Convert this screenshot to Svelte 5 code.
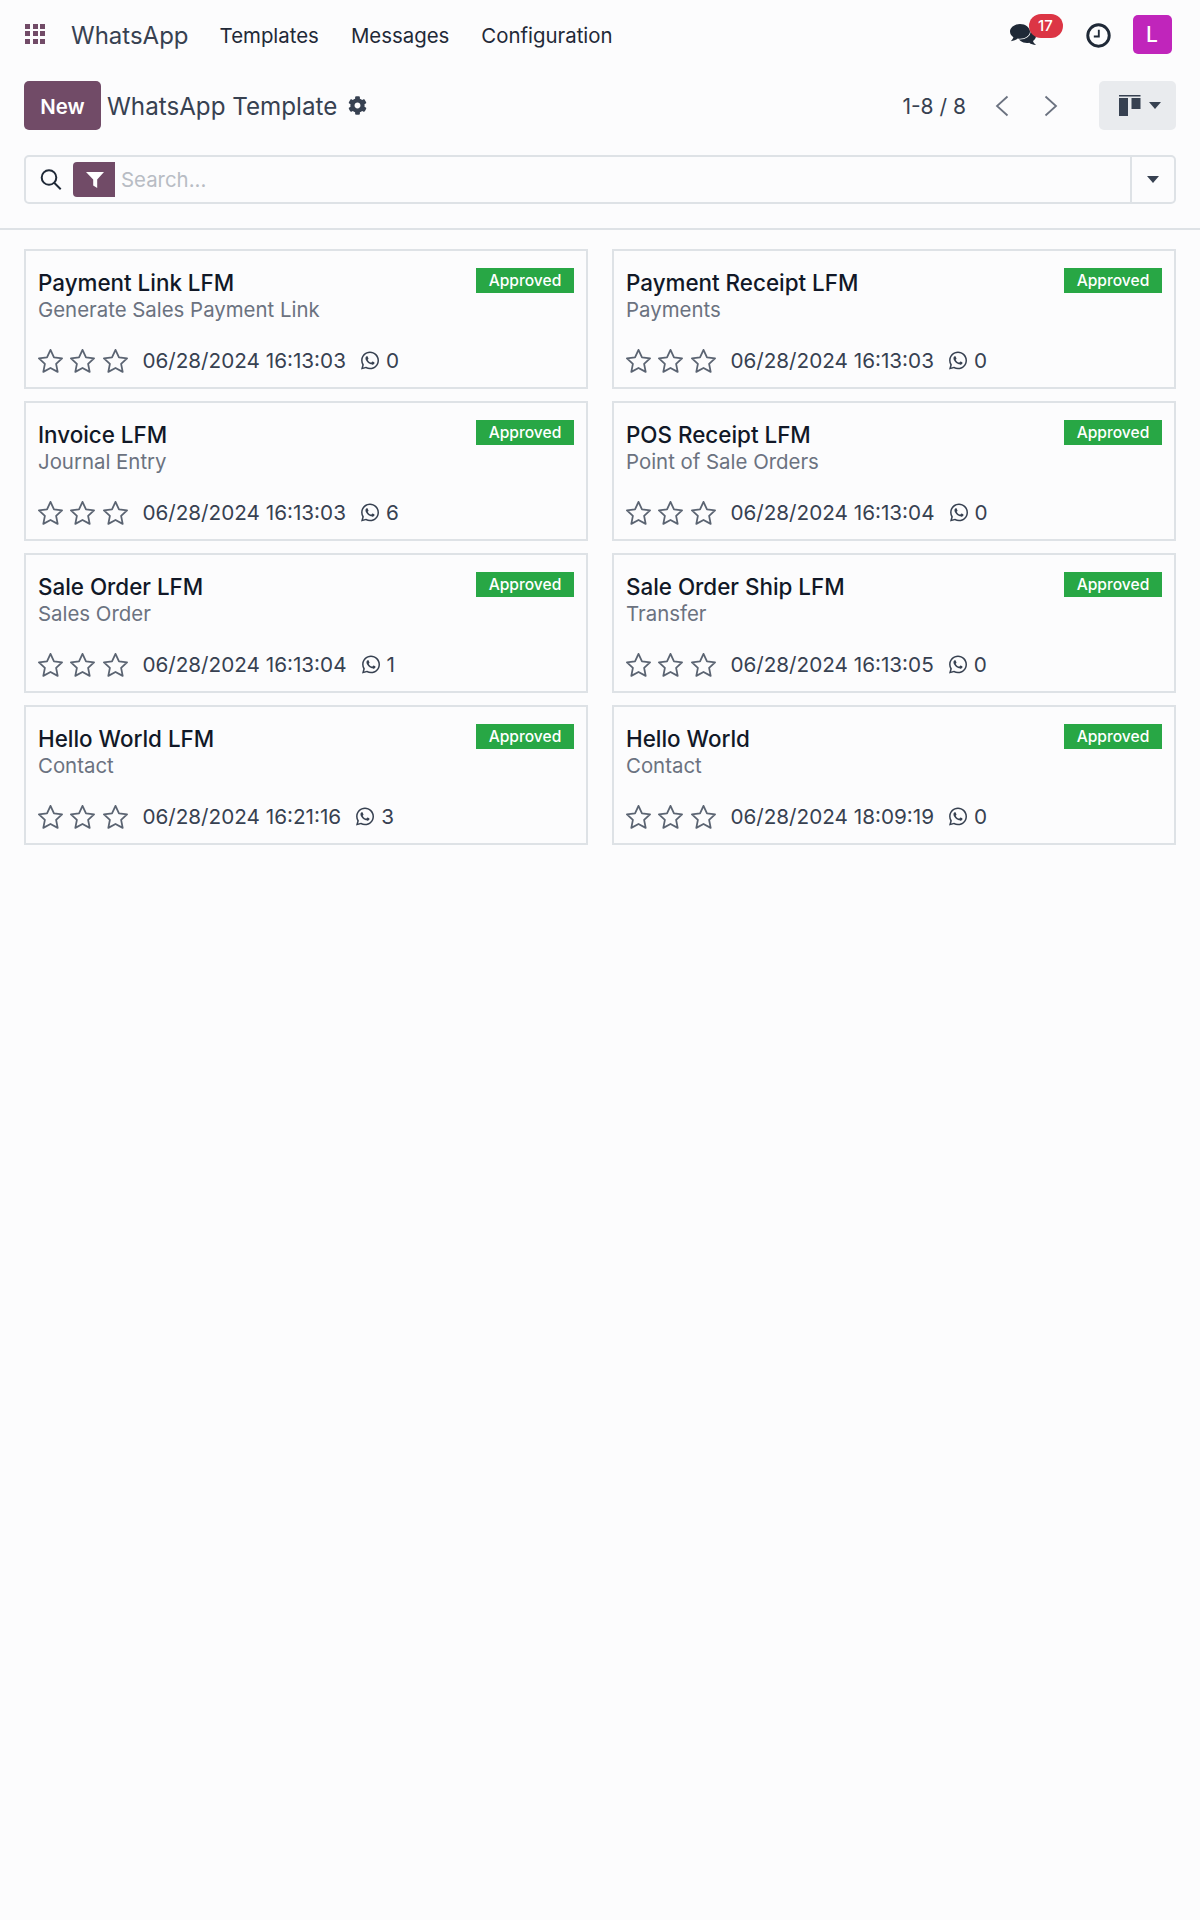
<script lang="ts">
    interface Template {
        name: string;
        model: string;
        date: string;
        count: number;
    }

    const templates: Template[] = [
        { name: "Payment Link LFM", model: "Generate Sales Payment Link", date: "06/28/2024 16:13:03", count: 0 },
        { name: "Payment Receipt LFM", model: "Payments", date: "06/28/2024 16:13:03", count: 0 },
        { name: "Invoice LFM", model: "Journal Entry", date: "06/28/2024 16:13:03", count: 6 },
        { name: "POS Receipt LFM", model: "Point of Sale Orders", date: "06/28/2024 16:13:04", count: 0 },
        { name: "Sale Order LFM", model: "Sales Order", date: "06/28/2024 16:13:04", count: 1 },
        { name: "Sale Order Ship LFM", model: "Transfer", date: "06/28/2024 16:13:05", count: 0 },
        { name: "Hello World LFM", model: "Contact", date: "06/28/2024 16:21:16", count: 3 },
        { name: "Hello World", model: "Contact", date: "06/28/2024 18:09:19", count: 0 },
    ];

    const menu = ["Templates", "Messages", "Configuration"];
    const stars = [0, 1, 2];
    const dots = [0, 1, 2, 3, 4, 5, 6, 7, 8];
</script>

<div class="page">
    <nav class="navbar">
        <div class="apps">
            {#each dots as d}<span class="dot"></span>{/each}
        </div>
        <span class="brand">WhatsApp</span>
        {#each menu as item}
            <span class="menu-item">{item}</span>
        {/each}
        <div class="systray">
            <div class="chat">
                <svg class="chat-icon" viewBox="0 0 27 22" aria-hidden="true">
                    <path d="M17 5c-5 0-9 3-9 7s4 7 9 7c.8 0 1.500-.1 2.200-.2 1.800 1.300 4 2.100 6.800 2.200-1.300-1-2.500-2.300-3-3.900 1.800-1.300 3-3.100 3-5.100 0-4-4-7-9-7z" fill="#1f2937"/>
                    <path d="M10 0C4.500 0 0 3.400 0 7.600c0 2.300 1.300 4.300 3.400 5.700C3 14.900 2 16 .8 17.200c2.800-.2 5.200-1.200 7-2.600.7.100 1.500.2 2.200.2 5.500 0 10-3.200 10-7.200S15.500 0 10 0z" fill="#1f2937" stroke="#fcfcfd" stroke-width="1.400" paint-order="stroke"/>
                </svg>
                <span class="badge">17</span>
            </div>
            <svg class="clock" viewBox="0 0 24 24" aria-hidden="true">
                <circle cx="12" cy="12" r="10.300" fill="none" stroke="#1f2937" stroke-width="2.800"/>
                <path d="M12.300 6.500v6.500H7.500" fill="none" stroke="#1f2937" stroke-width="1.800"/>
            </svg>
            <div class="avatar">L</div>
        </div>
    </nav>

    <header class="control-panel">
        <div class="title-row">
            <button class="btn-new">New</button>
            <span class="page-title">WhatsApp Template</span>
            <svg class="gear" viewBox="0 0 512 512" aria-hidden="true">
                <path fill="#374151" d="M487.400 315.700l-42.600-24.600c4.300-23.200 4.300-47 0-70.200l42.600-24.600c4.900-2.800 7.100-8.600 5.500-14-11.100-35.600-30-67.800-54.700-94.600-3.800-4.100-10-5.100-14.800-2.300L380.800 110c-17.900-15.400-38.500-27.300-60.800-35.100V25.800c0-5.600-3.900-10.500-9.400-11.700-36.700-8.200-74.300-7.800-109.200 0-5.500 1.200-9.400 6.100-9.400 11.700V75c-22.200 7.900-42.800 19.800-60.800 35.100L88.700 85.500c-4.900-2.800-11-1.900-14.800 2.300-24.700 26.700-43.600 58.900-54.700 94.600-1.700 5.400.6 11.200 5.500 14L67.300 221c-4.300 23.200-4.300 47 0 70.200l-42.600 24.600c-4.900 2.800-7.100 8.600-5.500 14 11.100 35.600 30 67.800 54.700 94.600 3.800 4.100 10 5.100 14.800 2.300l42.600-24.600c17.900 15.400 38.500 27.300 60.800 35.100v49.200c0 5.600 3.900 10.500 9.400 11.700 36.700 8.200 74.300 7.800 109.200 0 5.500-1.200 9.400-6.100 9.400-11.700v-49.200c22.200-7.900 42.800-19.800 60.800-35.100l42.600 24.600c4.900 2.800 11 1.900 14.800-2.300 24.700-26.700 43.600-58.900 54.700-94.600 1.500-5.500-.7-11.300-5.600-14.100zM256 336c-44.100 0-80-35.900-80-80s35.900-80 80-80 80 35.900 80 80-35.900 80-80 80z"/>
            </svg>
            <div class="pager">
                <span class="pager-count">1-8 / 8</span>
                <svg class="chevron" viewBox="0 0 14 22" aria-hidden="true">
                    <path d="M12.500 1.500 2 11l10.500 9.500" fill="none" stroke="#6b7280" stroke-width="1.800"/>
                </svg>
                <svg class="chevron next" viewBox="0 0 14 22" aria-hidden="true">
                    <path d="M1.500 1.500 12 11 1.500 20.500" fill="none" stroke="#6b7280" stroke-width="1.800"/>
                </svg>
            </div>
            <button class="btn-view" aria-label="Switch view">
                <svg class="kanban" viewBox="0 0 22 21" aria-hidden="true">
                    <path d="M0 0h21.500v1.500H0zM0 3h9v18H0zM12.500 3h9v11h-9z" fill="#374151"/>
                </svg>
                <span class="caret"></span>
            </button>
        </div>

        <div class="search">
            <svg class="search-icon" viewBox="0 0 22 21" aria-hidden="true">
                <circle cx="9" cy="8.500" r="7.300" fill="none" stroke="#1f2937" stroke-width="2"/>
                <path d="m14.200 13.700 6.500 6.500" fill="none" stroke="#1f2937" stroke-width="2"/>
            </svg>
            <span class="facet">
                <svg viewBox="0 0 18 16" aria-hidden="true">
                    <path d="M0 0h18l-6.800 7.500V16L7.200 13.500v-6z" fill="#fff"/>
                </svg>
            </span>
            <span class="placeholder">Search...</span>
            <span class="search-toggle"><span class="caret"></span></span>
        </div>
    </header>

    <main class="kanban-grid">
        {#each templates as t}
            <article class="card">
                <div class="card-top">
                    <div class="card-text">
                        <div class="card-name">{t.name}</div>
                        <div class="card-model">{t.model}</div>
                    </div>
                    <span class="status">Approved</span>
                </div>
                <div class="card-bottom">
                    <div class="stars">
                        {#each stars as s}
                            <svg class="star" viewBox="0.900 1 22.200 21.400" aria-hidden="true">
                                <path d="m12 1.800 3.100 6.600 7.200.9-5.300 5 1.400 7.100-6.400-3.500-6.400 3.500L7 14.300l-5.300-5 7.200-.9z" fill="none" stroke="#5b6472" stroke-width="1.600" stroke-linejoin="round"/>
                            </svg>
                        {/each}
                    </div>
                    <span class="date">{t.date}</span>
                    <svg class="wa" viewBox="0 0 448 512" aria-hidden="true">
                        <path fill="#374151" d="M380.900 97.100C339 55.100 283.200 32 223.900 32c-122.400 0-222 99.600-222 222 0 39.100 10.200 77.300 29.600 111L0 480l117.700-30.900c32.400 17.700 68.900 27 106.100 27h.1c122.300 0 224.100-99.600 224.100-222 0-59.300-25.200-115-67.100-157zm-157 341.600c-33.200 0-65.700-8.900-94-25.700l-6.700-4-69.800 18.300L72 359.200l-4.400-7c-18.500-29.400-28.200-63.300-28.200-98.200 0-101.700 82.800-184.500 184.600-184.500 49.300 0 95.600 19.200 130.400 54.100 34.800 34.900 56.200 81.200 56.100 130.500 0 101.800-84.900 184.600-186.600 184.600zm101.200-138.200c-5.500-2.800-32.800-16.200-37.900-18-5.100-1.900-8.800-2.800-12.500 2.800-3.700 5.600-14.300 18-17.600 21.800-3.200 3.700-6.500 4.200-12 1.400-32.600-16.300-54-29.100-75.500-66-5.700-9.800 5.700-9.100 16.300-30.300 1.800-3.700.9-6.900-.5-9.700-1.400-2.800-12.500-30.100-17.100-41.200-4.500-10.800-9.100-9.300-12.500-9.500-3.200-.2-6.900-.2-10.600-.2-3.700 0-9.700 1.400-14.800 6.900-5.100 5.600-19.400 19-19.400 46.300 0 27.300 19.900 53.700 22.600 57.400 2.800 3.700 39.100 59.700 94.800 83.800 35.200 15.200 49 16.500 66.600 13.900 10.700-1.600 32.800-13.400 37.400-26.400 4.600-13 4.600-24.100 3.200-26.400-1.300-2.500-5-3.900-10.500-6.600z"/>
                    </svg>
                    <span class="count">{t.count}</span>
                </div>
            </article>
        {/each}
    </main>
</div>

<style>
    :global(body) {
        background: #fcfcfd;
    }

    .page {
        min-height: 1920px;
        background: #fcfcfd;
        font-family: Inter, "Noto Sans", sans-serif;
        font-size: 20.4px;
        color: #374151;
    }

    .navbar {
        display: flex;
        align-items: center;
        height: 69px;
        padding: 0 24px;
        box-sizing: border-box;
    }

    .apps {
        display: grid;
        grid-template-columns: repeat(3, 5px);
        gap: 2.500px;
        width: 20px;
        margin: -2px 26px 0 1px;
    }

    .dot {
        width: 5px;
        height: 5px;
        background: #714b67;
    }

    .brand {
        font-size: 24px;
        padding-top: 1px;
        margin-right: 31px;
    }

    .menu-item {
        color: #1f2937;
        padding-top: 2px;
        margin-right: 32px;
    }

    .systray {
        display: flex;
        align-items: center;
        margin-left: auto;
        margin-right: 4.500px;
    }

    .chat {
        position: relative;
        width: 27px;
        height: 22px;
        margin: 1px 49px 0 0;
    }

    .chat-icon {
        display: block;
        width: 27px;
        height: 22px;
    }

    .badge {
        position: absolute;
        top: -10.500px;
        left: 19px;
        width: 34px;
        height: 24px;
        border-radius: 12px;
        background: #dc3545;
        color: #fff;
        font-size: 15px;
        font-weight: 500;
        line-height: 24px;
        text-align: center;
    }

    .clock {
        width: 25px;
        height: 25px;
        margin: 1px 22px 0 0;
    }

    .avatar {
        width: 39px;
        height: 39px;
        border-radius: 5px;
        background: #c025bb;
        color: #fff;
        font-size: 21px;
        font-weight: 500;
        line-height: 39px;
        text-align: center;
    }

    .control-panel {
        padding: 12px 24px 24px;
        border-bottom: 2px solid #dee2e6;
    }

    .title-row {
        display: flex;
        align-items: center;
        height: 49px;
        margin-bottom: 25px;
    }

    .btn-new {
        width: 77px;
        height: 49px;
        margin-right: 6px;
        padding: 1px 0 0;
        border: 0;
        border-radius: 5px;
        background: #714b67;
        color: #fff;
        font: 600 20.4px Inter, sans-serif;
    }

    .page-title {
        font-size: 24.2px;
        padding-top: 2px;
        margin-right: 11px;
    }

    .gear {
        width: 19px;
        height: 19px;
    }

    .pager {
        display: flex;
        align-items: center;
        margin-left: auto;
        margin-right: 41px;
    }

    .pager-count {
        font-size: 21px;
        padding-top: 2px;
        margin-right: 29px;
    }

    .chevron {
        width: 14px;
        height: 22px;
    }

    .next {
        margin-left: 35px;
    }

    .btn-view {
        display: flex;
        align-items: center;
        width: 77px;
        height: 49px;
        padding: 0 0 0 19.500px;
        border: 0;
        border-radius: 5px;
        background: #e9ebee;
    }

    .kanban {
        width: 22px;
        height: 21px;
        margin-right: 8px;
    }

    .caret {
        display: block;
        border-top: 7px solid #374151;
        border-left: 6px solid transparent;
        border-right: 6px solid transparent;
    }

    .search {
        display: flex;
        align-items: center;
        height: 49px;
        box-sizing: border-box;
        border: 2px solid #dee2e6;
        border-radius: 5px;
    }

    .search-icon {
        width: 22px;
        height: 21px;
        margin: 0 11px 0 14px;
    }

    .facet {
        display: flex;
        align-items: center;
        justify-content: center;
        width: 42px;
        height: 35px;
        border-radius: 4px 0 0 4px;
        background: #714b67;
    }

    .facet svg {
        width: 18px;
        height: 16px;
        margin-left: 2px;
    }

    .placeholder {
        margin-left: 6px;
        color: #b8bcc4;
    }

    .search-toggle {
        display: flex;
        align-items: center;
        justify-content: center;
        width: 42px;
        height: 100%;
        margin-left: auto;
        border-left: 2px solid #dee2e6;
    }

    .kanban-grid {
        display: grid;
        grid-template-columns: repeat(2, 564px);
        gap: 12px 24px;
        padding: 19px 24px 0;
    }

    .card {
        display: flex;
        flex-direction: column;
        justify-content: space-between;
        height: 140px;
        box-sizing: border-box;
        padding: 17px 12px 12.500px;
        border: 2px solid #dee2e6;
    }

    .card-top {
        display: flex;
        justify-content: space-between;
        align-items: flex-start;
    }

    .card-name {
        font-size: 22.4px;
        font-weight: 500;
        line-height: 29px;
        color: #111827;
    }

    .card-model {
        line-height: 26px;
        color: #6b7280;
    }

    .status {
        width: 98px;
        height: 25px;
        background: #28a745;
        color: #fff;
        font-size: 15.600px;
        font-weight: 500;
        line-height: 25px;
        text-align: center;
    }

    .card-bottom {
        display: flex;
        align-items: center;
        height: 28px;
    }

    .stars {
        display: flex;
        gap: 7.700px;
        margin: 0 14.500px 0 -0.500px;
    }

    .star {
        width: 25px;
        height: 24px;
    }

    .date {
        font-size: 20.700px;
        color: #374151;
        margin-right: 15px;
    }

    .wa {
        width: 18px;
        height: 21px;
        margin-right: 7px;
    }

    .count {
        font-size: 20.700px;
    }
</style>
